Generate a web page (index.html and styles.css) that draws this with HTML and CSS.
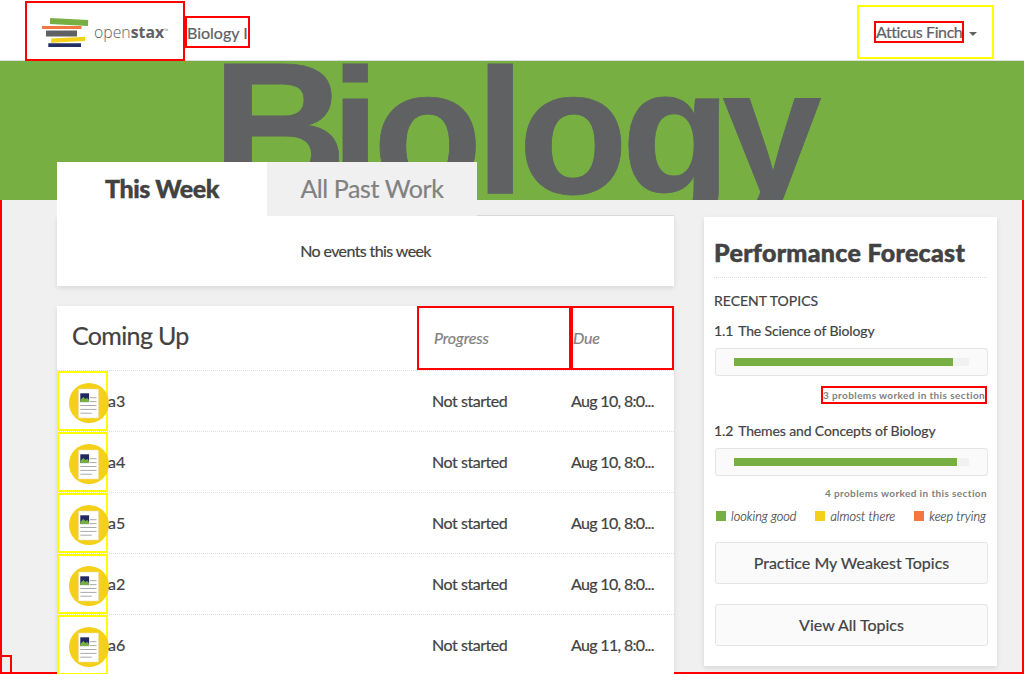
FILE: index.html
```
<!DOCTYPE html>
<html lang="en">
<head>
<meta charset="utf-8">
<title>Biology I</title>
<link rel="stylesheet" href="styles.css">
</head>
<body>
<svg class="defs" width="0" height="0">
  <symbol id="reading" viewBox="0 0 40 40">
    <circle cx="20" cy="20" r="20" fill="#f4d019"/>
    <rect x="9.5" y="6" width="20" height="29" rx=".6" fill="#fff" stroke="#e9dfae" stroke-width=".6"/>
    <rect x="11.3" y="10.3" width="8.8" height="8.8" fill="#212960"/>
    <path d="M11.3 17l3-3 2 2 2-1 1.8 2v2.100h-8.800z" fill="#77af42"/>
    <path d="M21 14.700h6.500M21 18.600h6.500M11.300 22.500h16.200M11.300 26.400h16.200M11.300 30.200h11.500" stroke="#aaa" stroke-width="1"/>
  </symbol>
</svg>
<header class="navbar">
  <a class="logo">
    <svg class="books" width="48" height="30" viewBox="0 0 48 30">
      <path d="M8.200 0l38 2-.3 6-38-2z" fill="#77af42"/>
      <path d="M0 8h39.500v3H0z" fill="#f47641"/>
      <path d="M4 12.500h31v6H4z" fill="#5f6163"/>
      <path d="M9.500 20.500l33.500-1.700v4.200L9 24.700z" fill="#f4d019"/>
      <path d="M6.300 25.200H39v3.700H6.300z" fill="#212f65"/>
    </svg>
    <span class="wordmark">open<b>stax</b><small>™</small></span>
  </a>
  <a class="course">Biology I</a>
  <div class="user"><span class="user-name">Atticus Finch</span><i class="caret"></i></div>
</header>
<div class="hero">
  <svg width="1024" height="139" viewBox="0 0 1024 139" class="hero-title">
    <text y="132"><tspan class="cap" x="212">B</tspan><tspan x="330.500 373 475.500 518.500 621.500 722">iology</tspan></text>
  </svg>
</div>
<main class="dashboard">
  <section class="left">
    <nav class="tabs"><a class="tab active">This Week</a><a class="tab">All Past Work</a></nav>
    <div class="card empty">No events this week</div>
    <div class="card upcoming">
      <div class="head"><h2>Coming Up</h2><span class="col-progress">Progress</span><span class="col-due">Due</span></div>
      <div class="row"><span class="icon"><svg width="40" height="40"><use href="#reading"/></svg></span><span class="name">a3</span><span class="status">Not started</span><span class="date">Aug 10, 8:0...</span></div>
      <div class="row"><span class="icon"><svg width="40" height="40"><use href="#reading"/></svg></span><span class="name">a4</span><span class="status">Not started</span><span class="date">Aug 10, 8:0...</span></div>
      <div class="row"><span class="icon"><svg width="40" height="40"><use href="#reading"/></svg></span><span class="name">a5</span><span class="status">Not started</span><span class="date">Aug 10, 8:0...</span></div>
      <div class="row"><span class="icon"><svg width="40" height="40"><use href="#reading"/></svg></span><span class="name">a2</span><span class="status">Not started</span><span class="date">Aug 10, 8:0...</span></div>
      <div class="row"><span class="icon"><svg width="40" height="40"><use href="#reading"/></svg></span><span class="name">a6</span><span class="status">Not started</span><span class="date">Aug 11, 8:0...</span></div>
    </div>
  </section>
  <aside class="card forecast">
    <h1>Performance Forecast</h1>
    <h3>RECENT TOPICS</h3>
    <div class="topic"><span>1.1</span><span>The Science of Biology</span></div>
    <div class="meter"><div class="track"><div class="fill" style="width:93.200%"></div></div></div>
    <div class="worked"><span class="marked">3 problems worked in this section</span></div>
    <div class="topic second"><span>1.2</span><span>Themes and Concepts of Biology</span></div>
    <div class="meter"><div class="track"><div class="fill" style="width:94.900%"></div></div></div>
    <div class="worked last"><span>4 problems worked in this section</span></div>
    <div class="legend"><span><i class="good"></i>looking good</span><span><i class="almost"></i>almost there</span><span><i class="trying"></i>keep trying</span></div>
    <button>Practice My Weakest Topics</button>
    <button>View All Topics</button>
  </aside>
  <div class="corner"></div>
</main>
</body>
</html>
```
FILE: styles.css
```
* { box-sizing: border-box; }
body { margin: 0; width: 1024px; height: 674px; overflow: hidden; background: #f0f0f0; color: #424242; font: 16px/20px Lato, sans-serif; -webkit-text-stroke: .2px; }
.defs { position: absolute; }
svg { display: block; flex: none; }
.navbar { display: flex; height: 61px; padding: 0 30px 0 25px; background: #fff; border-bottom: 1px solid #ddd; color: #5f6163; }
.logo { display: flex; width: 160px; height: 60px; margin-top: 1px; padding: 15px 0 0 15px; border: 2px solid #f00; position: relative; gap: 4px; }
.wordmark { font: 300 15.8px/27px "Open Sans", sans-serif; letter-spacing: 0; white-space: nowrap; -webkit-text-stroke: 0; }
.wordmark b { font-weight: 700; }
.wordmark small { font-size: 6px; vertical-align: 5px; }
.course { width: 65px; height: 32px; margin-top: 16px; border: 2px solid #f00; line-height: 29px; white-space: nowrap; }
.user { display: flex; width: 137px; height: 54px; margin: 5px 0 0 auto; padding: 14px 0 0 15px; border: 2px solid #ff0; }
.user-name { width: 90px; height: 22px; border: 2px solid #f00; line-height: 18px; letter-spacing: -.4px; white-space: nowrap; }
.caret { width: 0; height: 0; margin: 11px 0 0 5px; border: 4px solid transparent; border-top-color: #5f6163; }
.hero { height: 139px; background: #77af42; overflow: hidden; }
.hero-title { fill: #5f6163; font: bold 179px "Liberation Sans", sans-serif; stroke: #5f6163; stroke-width: .8px; -webkit-text-stroke: .8px #5f6163; }
.cap { font-size: 187px; }
.dashboard { position: relative; display: flex; height: 474px; padding: 0 25px 0 55px; border: solid #f00; border-width: 0 2px 2px; }
.left { width: 617px; height: 512px; margin-top: -38px; flex: none; position: relative; z-index: 1; }
.tabs { display: flex; height: 54px; box-shadow: inset 0 -1px #ddd; }
.tab { width: 210px; height: 54px; background: #f0f0f0; color: #818181; font-size: 25px; line-height: 53px; letter-spacing: -.4px; text-align: center; }
.tab.active { background: #fff; color: #424242; font-weight: 900; letter-spacing: -.4px; -webkit-text-stroke: .4px; }
.card { background: #fff; box-shadow: 0 2px 5px rgba(0,0,0,.1); }
.empty { height: 70px; line-height: 70px; letter-spacing: -.6px; text-align: center; }
.upcoming { height: 368px; margin-top: 20px; }
.head { display: flex; height: 65px; border-bottom: 1px dotted #ddd; }
.head h2 { width: 360px; margin: 0; padding-left: 15px; font-size: 25px; line-height: 59px; letter-spacing: -.65px; font-weight: 400; }
.head span { height: 64px; border: 2px solid #f00; font-style: italic; line-height: 59px; color: #818181; letter-spacing: -.1px; }
.head .col-progress { width: 154px; padding-left: 15px; }
.head .col-due { width: 103px; letter-spacing: -.3px; }
.row { display: flex; height: 61px; border-bottom: 1px dotted #ddd; line-height: 60px; }
.icon { width: 51px; height: 60px; padding: 10px 0 0 10px; border: 2px solid #ff0; }
.name { width: 324px; }
.status { width: 139px; letter-spacing: -.45px; }
.date { letter-spacing: -.67px; }
.forecast { width: 293px; height: 449px; margin: 17px 0 0 30px; padding: 15px 10px 0; display: flex; flex-direction: column; flex: none; }
.forecast h1 { height: 46px; margin: 0; border-bottom: 1px dotted #ddd; font-size: 25px; line-height: 41px; letter-spacing: .3px; font-weight: 900; white-space: nowrap; -webkit-text-stroke: .5px; }
.forecast h3 { margin: 13px 0 10px; font-size: 14px; line-height: 20px; font-weight: 400; }
.topic { display: flex; gap: 5px; height: 20px; font-size: 14px; line-height: 20px; letter-spacing: -.13px; }
.meter { width: 273px; height: 28px; margin: 7px 0 0 1px; padding: 9px 18px; border: 1px solid #e5e5e5; border-radius: 3px; background: #fafafa; flex: none; }
.track { height: 8px; background: #f1f1f1; }
.fill { height: 8px; background: #77af42; }
.worked { display: flex; justify-content: flex-end; height: 18px; margin-top: 10px; color: #818181; font-size: 10px; font-weight: 700; line-height: 17px; letter-spacing: .39px; white-space: nowrap; -webkit-text-stroke: 0; }
.marked { width: 166px; border: 2px solid #f00; line-height: 14px; }
.second { margin-top: 17px; }
.worked.last { margin-top: 9px; }
.legend { display: flex; justify-content: space-between; height: 20px; margin: 3px 1px 0 2px; font-size: 12.800px; font-style: italic; font-weight: 300; line-height: 20px; }
.legend span { display: flex; align-items: center; gap: 5px; }
.legend i { width: 10px; height: 10px; }
.good { background: #77af42; }
.almost { background: #f4d019; }
.trying { background: #f47641; }
.forecast button { width: 273px; height: 42px; margin: 16px 0 4px 1px; padding: 0 0 2px; border: 1px solid #e5e5e5; border-radius: 3px; background: #fafafa; color: #424242; font: 16px Lato, sans-serif; flex: none; -webkit-text-stroke: .2px; }
.corner { position: absolute; left: -2px; bottom: -2px; width: 12px; height: 19px; border: 2px solid #f00; }
```
